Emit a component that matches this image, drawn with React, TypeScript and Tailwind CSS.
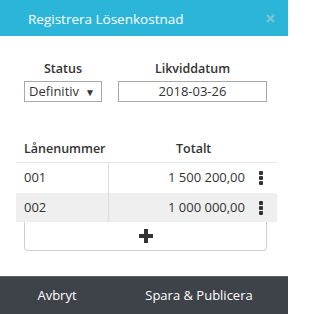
import React from "react";

const rows = [
  { id: "001", total: "1 500 200,00" },
  { id: "002", total: "1 000 000,00" },
];

const Kebab: React.FC = () => (
  <svg width="6" height="16" viewBox="0 0 6 16" className="fill-[#333]">
    <rect x="1" y="1" width="4" height="4" rx="1" />
    <rect x="1" y="6" width="4" height="4" rx="1" />
    <rect x="1" y="11" width="4" height="4" rx="1" />
  </svg>
);

export default function App() {
  return (
    <div
      className="w-[288px] h-[314px] flex flex-col bg-white text-[#333]"
      style={{ fontFamily: '"Open Sans", "Noto Sans", sans-serif' }}
    >
      <div className="h-9 shrink-0 bg-[#2bb5d9] flex items-center justify-between pl-7 pr-[13px]">
        <span className="text-white text-[13.5px] pt-[2px]">Registrera Lösenkostnad</span>
        <svg width="9" height="9" viewBox="0 0 9 9" className="stroke-[#84c3d6]" strokeWidth="2">
          <path d="M1 1 L8 8 M8 1 L1 8" />
        </svg>
      </div>

      <div className="flex gap-4 pl-6 pr-[21px] pt-[25px]">
        <div className="w-[78px] flex flex-col items-center">
          <label className="font-semibold text-[12.5px] leading-4 mb-[4px]">Status</label>
          <div className="w-full h-[21px] border border-[#a9a9a9] flex items-center justify-between pl-1 pr-[6px]">
            <span className="text-[13px]">Definitiv</span>
            <span className="text-[10px] leading-none">▼</span>
          </div>
        </div>
        <div className="flex-1 flex flex-col items-center">
          <label className="font-semibold text-[12.5px] leading-4 mb-[4px]">Likviddatum</label>
          <div className="w-full h-[21px] border border-[#a9a9a9] flex items-center justify-center">
            <span className="text-[13px]">2018-03-26</span>
          </div>
        </div>
      </div>

      <div className="mx-4 mr-[11px] mt-[35px] text-[13px]">
        <div className="h-[26px] flex items-center border-b border-[#e6e6e6]">
          <div className="w-[93px] pl-2 font-semibold text-[12.5px]">Lånenummer</div>
          <div className="pl-[67px] font-semibold text-[12.5px]">Totalt</div>
        </div>
        {rows.map((r, i) => (
          <div
            key={r.id}
            className={`flex items-center ${i % 2 ? "bg-[#efefef] h-[29px]" : "h-[30px]"}`}
          >
            <div className="w-[93px] h-full flex items-center pl-2 border-r border-[#dcdcdc]">
              {r.id}
            </div>
            <div className="flex-1 text-right pr-[10px]">{r.total}</div>
            <div className="w-[22px] pl-[3px] flex justify-start">
              <Kebab />
            </div>
          </div>
        ))}
        <div className="mx-2 mr-[10px] h-[29px] border border-t-0 border-[#cfcfcf] rounded-b flex items-center justify-center">
          <svg width="14" height="14" viewBox="0 0 14 14" className="fill-[#333]">
            <rect x="5" y="0" width="4" height="14" />
            <rect x="0" y="5" width="14" height="4" />
          </svg>
        </div>
      </div>

      <div className="mt-auto h-[38px] bg-[#3e434a] border-t border-[#5a5f66] flex items-center text-white text-[13px]">
        <div className="w-[114px] text-center">Avbryt</div>
        <div className="flex-1 text-center pr-[4px]">Spara &amp; Publicera</div>
      </div>
    </div>
  );
}
